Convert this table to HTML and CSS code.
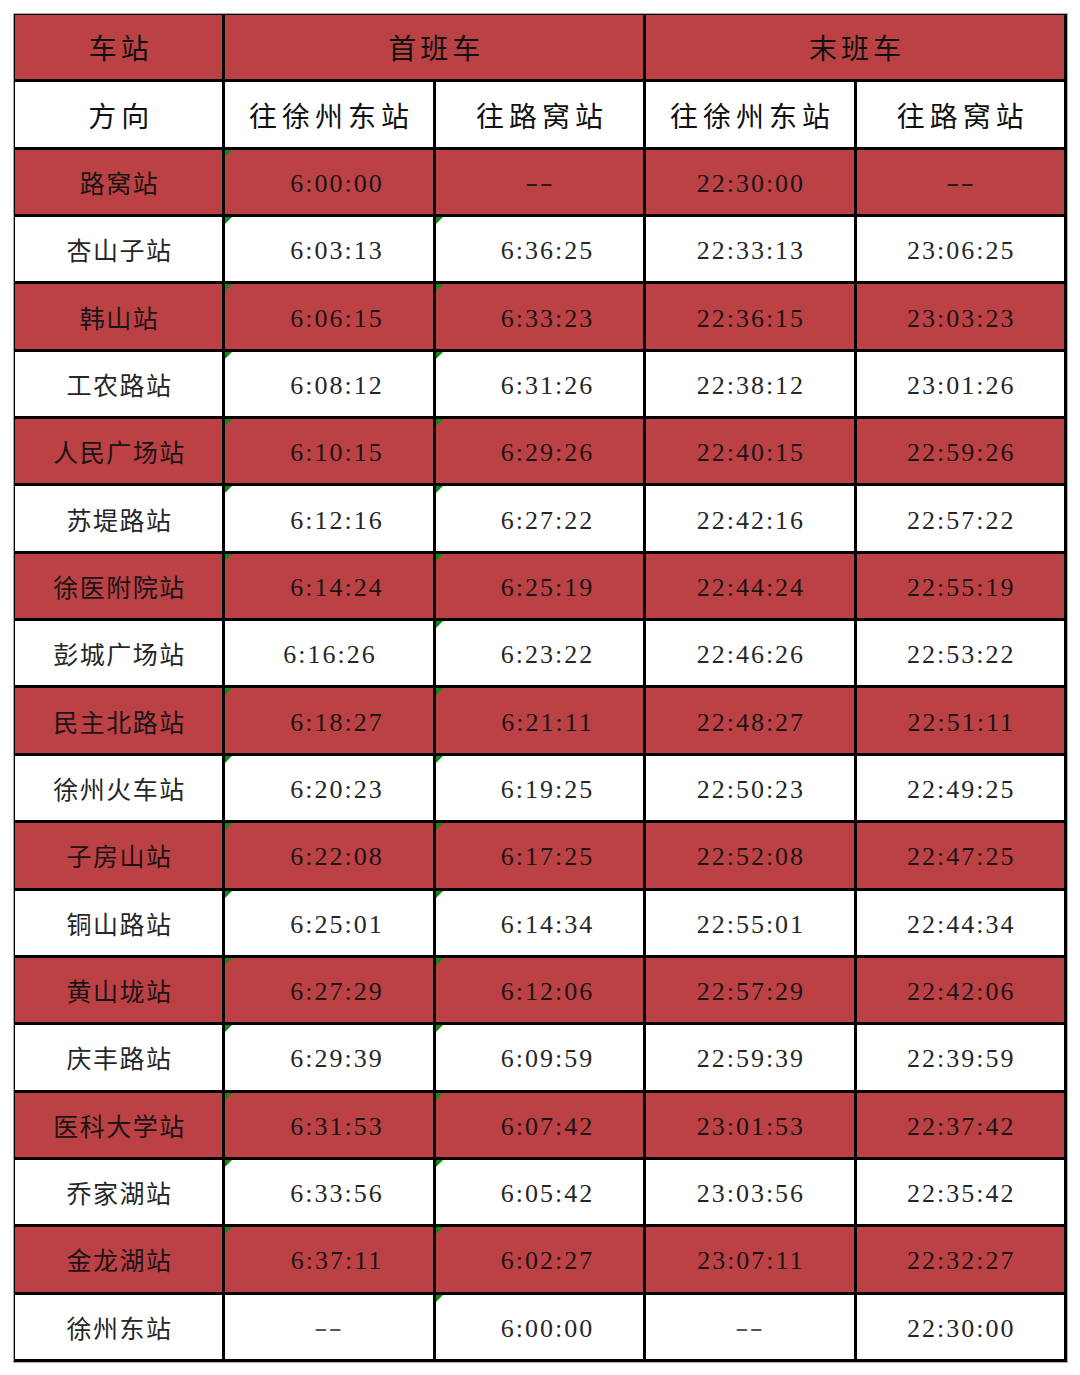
FILE: index.html
```html
<!DOCTYPE html>
<html lang="zh">
<head>
<meta charset="utf-8">
<title>首末班车时刻表</title>
<link rel="stylesheet" href="styles.css">
</head>
<body>
<div class="sheet">
  <div class="cell red head1">车站</div>
  <div class="cell red head1 span2">首班车</div>
  <div class="cell red head1 span2">末班车</div>

  <div class="cell white head2">方向</div>
  <div class="cell white head2">往徐州东站</div>
  <div class="cell white head2">往路窝站</div>
  <div class="cell white head2">往徐州东站</div>
  <div class="cell white head2">往路窝站</div>

  <div class="cell red name">路窝站</div>
  <div class="cell red time tri">6:00:00</div>
  <div class="cell red time dash"><span class="dash-text">--</span></div>
  <div class="cell red time">22:30:00</div>
  <div class="cell red time dash"><span class="dash-text">--</span></div>

  <div class="cell white name">杏山子站</div>
  <div class="cell white time tri">6:03:13</div>
  <div class="cell white time tri">6:36:25</div>
  <div class="cell white time">22:33:13</div>
  <div class="cell white time">23:06:25</div>

  <div class="cell red name">韩山站</div>
  <div class="cell red time tri">6:06:15</div>
  <div class="cell red time tri">6:33:23</div>
  <div class="cell red time">22:36:15</div>
  <div class="cell red time">23:03:23</div>

  <div class="cell white name">工农路站</div>
  <div class="cell white time tri">6:08:12</div>
  <div class="cell white time tri">6:31:26</div>
  <div class="cell white time">22:38:12</div>
  <div class="cell white time">23:01:26</div>

  <div class="cell red name">人民广场站</div>
  <div class="cell red time tri">6:10:15</div>
  <div class="cell red time tri">6:29:26</div>
  <div class="cell red time">22:40:15</div>
  <div class="cell red time">22:59:26</div>

  <div class="cell white name">苏堤路站</div>
  <div class="cell white time tri">6:12:16</div>
  <div class="cell white time tri">6:27:22</div>
  <div class="cell white time">22:42:16</div>
  <div class="cell white time">22:57:22</div>

  <div class="cell red name">徐医附院站</div>
  <div class="cell red time tri">6:14:24</div>
  <div class="cell red time tri">6:25:19</div>
  <div class="cell red time">22:44:24</div>
  <div class="cell red time">22:55:19</div>

  <div class="cell white name">彭城广场站</div>
  <div class="cell white time">6:16:26</div>
  <div class="cell white time tri">6:23:22</div>
  <div class="cell white time">22:46:26</div>
  <div class="cell white time">22:53:22</div>

  <div class="cell red name">民主北路站</div>
  <div class="cell red time tri">6:18:27</div>
  <div class="cell red time tri">6:21:11</div>
  <div class="cell red time">22:48:27</div>
  <div class="cell red time">22:51:11</div>

  <div class="cell white name">徐州火车站</div>
  <div class="cell white time tri">6:20:23</div>
  <div class="cell white time tri">6:19:25</div>
  <div class="cell white time">22:50:23</div>
  <div class="cell white time">22:49:25</div>

  <div class="cell red name">子房山站</div>
  <div class="cell red time tri">6:22:08</div>
  <div class="cell red time tri">6:17:25</div>
  <div class="cell red time">22:52:08</div>
  <div class="cell red time">22:47:25</div>

  <div class="cell white name">铜山路站</div>
  <div class="cell white time tri">6:25:01</div>
  <div class="cell white time tri">6:14:34</div>
  <div class="cell white time">22:55:01</div>
  <div class="cell white time">22:44:34</div>

  <div class="cell red name">黄山垅站</div>
  <div class="cell red time tri">6:27:29</div>
  <div class="cell red time tri">6:12:06</div>
  <div class="cell red time">22:57:29</div>
  <div class="cell red time">22:42:06</div>

  <div class="cell white name">庆丰路站</div>
  <div class="cell white time tri">6:29:39</div>
  <div class="cell white time tri">6:09:59</div>
  <div class="cell white time">22:59:39</div>
  <div class="cell white time">22:39:59</div>

  <div class="cell red name">医科大学站</div>
  <div class="cell red time tri">6:31:53</div>
  <div class="cell red time tri">6:07:42</div>
  <div class="cell red time">23:01:53</div>
  <div class="cell red time">22:37:42</div>

  <div class="cell white name">乔家湖站</div>
  <div class="cell white time tri">6:33:56</div>
  <div class="cell white time tri">6:05:42</div>
  <div class="cell white time">23:03:56</div>
  <div class="cell white time">22:35:42</div>

  <div class="cell red name">金龙湖站</div>
  <div class="cell red time tri">6:37:11</div>
  <div class="cell red time tri">6:02:27</div>
  <div class="cell red time">23:07:11</div>
  <div class="cell red time">22:32:27</div>

  <div class="cell white name">徐州东站</div>
  <div class="cell white time dash"><span class="dash-text">--</span></div>
  <div class="cell white time tri">6:00:00</div>
  <div class="cell white time dash"><span class="dash-text">--</span></div>
  <div class="cell white time">22:30:00</div>
</div>
</body>
</html>
```

FILE: styles.css
```css
html, body {
  margin: 0;
  padding: 0;
  background: #ffffff;
}

body {
  padding: 13px 0 0 13px;
  font-family: "Liberation Serif", "Noto Sans CJK SC", serif;
}

.sheet {
  box-sizing: border-box;
  width: 1055px;
  height: 1350px;
  border: 1px solid #a8a8a8;
  padding: 1px 3px 3px 1px;
  background: #000000;
  display: grid;
  grid-template-columns: repeat(5, 1fr);
  grid-template-rows: repeat(20, 1fr);
  gap: 3px;
}

.cell {
  position: relative;
  display: flex;
  align-items: center;
  justify-content: center;
  white-space: nowrap;
  min-width: 0;
}

.span2 {
  grid-column: span 2;
}

.red {
  background: #bb4145;
  color: #1c1416;
}

.white {
  background: #ffffff;
  color: #262626;
}

.head1 {
  font-family: "Noto Sans CJK SC", sans-serif;
  font-size: 28px;
  letter-spacing: 4px;
  padding-left: 4px;
  padding-top: 0;
  color: #111111;
}

.head2 {
  font-family: "Noto Sans CJK SC", sans-serif;
  font-size: 28px;
  letter-spacing: 5px;
  padding-left: 5px;
  padding-top: 0;
  color: #111111;
}

.name {
  font-family: "Noto Sans CJK SC", sans-serif;
  font-size: 25px;
  font-weight: 400;
  letter-spacing: 1.5px;
  padding-left: 1.5px;
  padding-top: 0;
}

.time {
  font-family: "Liberation Serif", serif;
  font-size: 26px;
  letter-spacing: 2px;
  padding-left: 2px;
  padding-top: 4px;
}

.time.dash {
  letter-spacing: 0;
  padding-left: 0;
  padding-top: 2px;
  color: #555555;
}

.dash-text {
  display: inline-block;
  letter-spacing: 1px;
  transform: scaleX(1.5);
}

.red.time.dash {
  color: #2a1a1c;
}

.time.tri {
  padding-left: 16px;
}

.tri::before {
  content: "";
  position: absolute;
  top: 0;
  left: 0;
  width: 0;
  height: 0;
  border-top: 7px solid #118a11;
  border-right: 7px solid transparent;
}
```
